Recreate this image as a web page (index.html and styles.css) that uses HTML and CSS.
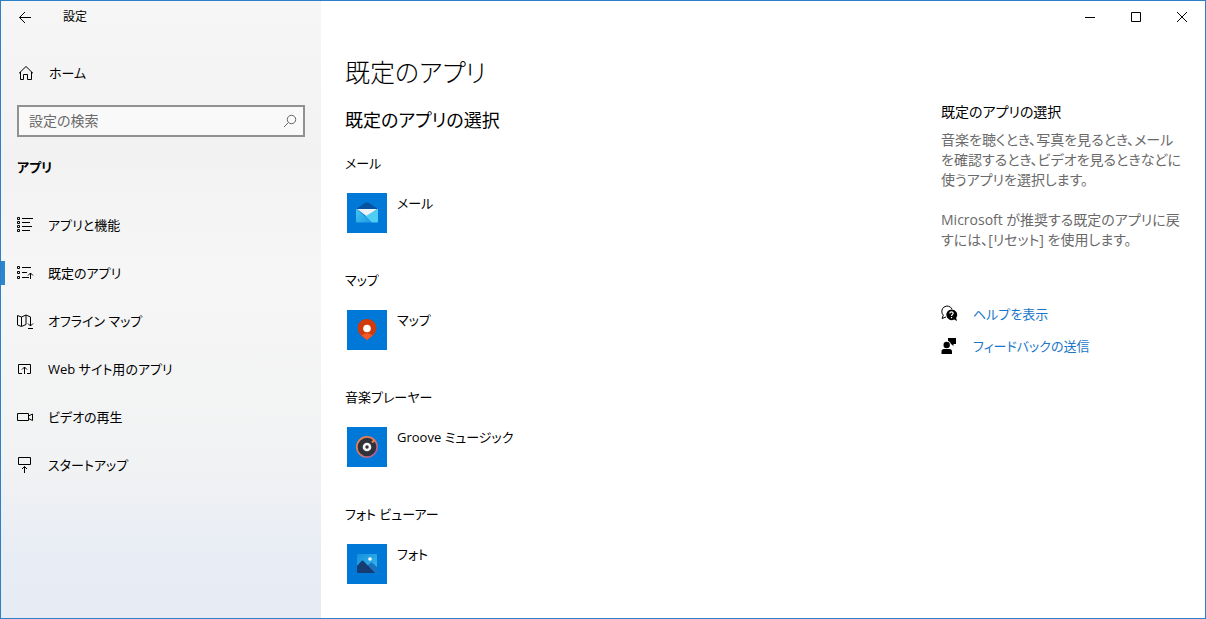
FILE: index.html
```html
<!DOCTYPE html>
<html lang="ja">
<head>
<meta charset="utf-8">
<meta name="viewport" content="width=device-width, initial-scale=1">
<title>設定</title>
<link rel="stylesheet" href="styles.css">
</head>
<body>
<div class="window">
  <div class="sidebar">
    <header class="titlebar">
      <button class="back" type="button" aria-label="戻る"><svg width="14" height="12" viewBox="0 0 14 12"><path d="M13 6.500H1.500M7 1L1.500 6.500 7 12"/></svg></button>
      <span class="app-name">設定</span>
    </header>
    <a class="home" href="#home">
      <svg width="16" height="16" viewBox="0 0 16 16"><path d="M1 8.300L8 1.500l7 6.800M2.500 7v7.500h3v-5h4v5h4V7"/></svg>
      <span>ホーム</span>
    </a>
    <form class="search" role="search">
      <input type="text" placeholder="設定の検索" aria-label="設定の検索">
      <button type="submit" aria-label="検索"><svg width="14" height="14" viewBox="0 0 14 14"><circle cx="8.500" cy="5.500" r="4.200"/><path d="M5.500 8.500L1 13"/></svg></button>
    </form>
    <h2 class="category">アプリ</h2>
    <nav class="nav" aria-label="アプリ">
      <a href="#features">
        <svg width="18" height="18" viewBox="0 0 18 18"><path d="M1.500 1.500h2v2h-2zM1.500 5.500h2v2h-2zM1.500 9.500h2v2h-2zM1.500 13.500h2v2h-2zM6 2.500h11M6 6.500h8M6 10.500h10M6 14.500h8"/></svg>
        <span>アプリと機能</span>
      </a>
      <a href="#defaults" aria-current="page">
        <svg width="18" height="18" viewBox="0 0 18 18"><path d="M1.500 2.500h2v2h-2zM1.500 7.500h2v2h-2zM1.500 12.500h2v2h-2zM6 3.500h9M6 8.500h5M6 13.500h7M14.500 15V9M12 11.500L14.500 9l2.500 2.500"/></svg>
        <span>既定のアプリ</span>
      </a>
      <a href="#maps">
        <svg width="18" height="18" viewBox="0 0 18 18"><path d="M10 12.500L5.500 14.500l-4-1.500V3.500l4 1.500 4.500-2 4.500 2V14M5.500 5v9M10 3v9.500M12 11.500l2.500 2.500 2.500-2.500M12 16.500h5"/></svg>
        <span>オフライン マップ</span>
      </a>
      <a href="#websites">
        <svg width="18" height="18" viewBox="0 0 18 18"><path d="M6 13.500H2.500v-9h12v9H11M8.500 14V7M6 9.500L8.500 7 11 9.500"/></svg>
        <span>Web サイト用のアプリ</span>
      </a>
      <a href="#video">
        <svg width="18" height="18" viewBox="0 0 18 18"><path d="M1.500 5.500h11v7h-11zM12.500 8l4-2v6.500l-4-2"/></svg>
        <span>ビデオの再生</span>
      </a>
      <a href="#startup">
        <svg width="18" height="18" viewBox="0 0 18 18"><path d="M2.500 1.500h12v7h-12zM8.500 17v-6.500M6 13l2.500-2.500L11 13"/></svg>
        <span>スタートアップ</span>
      </a>
    </nav>
  </div>

  <div class="content">
    <div class="caption">
      <button type="button" aria-label="最小化"><svg width="12" height="12" viewBox="0 0 12 12"><path d="M1 6.500h10"/></svg></button>
      <button type="button" aria-label="最大化"><svg width="12" height="12" viewBox="0 0 12 12"><path d="M1.500 1.500h9v9h-9z"/></svg></button>
      <button type="button" aria-label="閉じる"><svg width="12" height="12" viewBox="0 0 12 12"><path d="M1 1l10 10M11 1L1 11"/></svg></button>
    </div>
    <div class="columns">
      <main>
        <h1>既定のアプリ</h1>
        <h2>既定のアプリの選択</h2>
        <section class="group">
          <h3>メール</h3>
          <button class="app" type="button">
            <svg class="tile" width="40" height="40" viewBox="0 0 40 40">
              <defs><linearGradient id="mail" x2="1" y2="1"><stop stop-color="#45c9f2"/><stop offset="1" stop-color="#1d98e2"/></linearGradient></defs>
              <rect width="40" height="40" fill="#0078d7"/>
              <path d="M9 16l9-6q2-1.200 4 0l9 6z" fill="#0853a0"/>
              <path d="M10 16h20l-9.500 8z" fill="#eef3fa"/>
              <path d="M9 15.500L25 29.500H10q-1 0-1-1z" fill="url(#mail)"/>
              <path d="M31 15.500V28.500q0 1-1 1h-5L18.500 23.200z" fill="#4fcdf3"/>
            </svg>
            <span>メール</span>
          </button>
        </section>
        <section class="group">
          <h3>マップ</h3>
          <button class="app" type="button">
            <svg class="tile" width="40" height="40" viewBox="0 0 40 40">
              <rect width="40" height="40" fill="#0078d7"/>
              <path d="M20 9c-5.500 0-9.300 4-9.300 9 0 6 5.300 9 9.300 12 4-3 9.300-6 9.300-12 0-5-3.800-9-9.300-9z" fill="#d13b0b"/>
              <path d="M14.500 25.500q5.500-4.500 11 0L20 30z" fill="#f15a2b"/>
              <circle cx="20" cy="18.500" r="3.800" fill="#fff"/>
            </svg>
            <span>マップ</span>
          </button>
        </section>
        <section class="group">
          <h3>音楽プレーヤー</h3>
          <button class="app" type="button">
            <svg class="tile" width="40" height="40" viewBox="0 0 40 40">
              <defs><linearGradient id="groove" x2="1" y2="1"><stop stop-color="#f58b4c"/><stop offset=".5" stop-color="#d7775d"/><stop offset="1" stop-color="#8c55c8"/></linearGradient></defs>
              <rect width="40" height="40" fill="#0078d7"/>
              <circle cx="20" cy="20" r="11" fill="url(#groove)"/>
              <circle cx="20" cy="20" r="9.300" fill="#30313a"/>
              <path d="M25 15.500l2.500-2.500" fill="none" stroke="#ef8459" stroke-width="2"/>
              <circle cx="20" cy="20" r="4.300" fill="#f5f5f5"/>
              <circle cx="20" cy="20" r="1.700" fill="#30313a"/>
            </svg>
            <span>Groove ミュージック</span>
          </button>
        </section>
        <section class="group">
          <h3>フォト ビューアー</h3>
          <button class="app" type="button">
            <svg class="tile" width="40" height="40" viewBox="0 0 40 40">
              <defs>
                <linearGradient id="sky" x2="1" y2="1"><stop stop-color="#1590df"/><stop offset="1" stop-color="#39bdec"/></linearGradient>
                <clipPath id="photo"><rect x="10" y="10" width="20" height="19" rx="1"/></clipPath>
              </defs>
              <rect width="40" height="40" fill="#0078d7"/>
              <g clip-path="url(#photo)">
                <path d="M10 10h20v19H10z" fill="url(#sky)"/>
                <path d="M20 22l3.500-3q1-1 2 0L31 24v6H20z" fill="#1b72bd"/>
                <path d="M9 23l5.500-6q1-1 2 0L28 29H9z" fill="#173b73"/>
              </g>
              <circle cx="23" cy="15" r="1.800" fill="#fff"/>
            </svg>
            <span>フォト</span>
          </button>
        </section>
      </main>
      <aside>
        <h2>既定のアプリの選択</h2>
        <p>音楽を聴くとき、写真を見るとき、メール<br>を確認するとき、ビデオを見るときなどに<br>使うアプリを選択します。</p>
        <p>Microsoft が推奨する既定のアプリに戻<br>すには、[リセット] を使用します。</p>
        <div class="links">
          <a href="#help">
            <svg width="18" height="18" viewBox="0 0 18 18"><path d="M5 12L1 13.500l1.300-3.300A5.400 5.400 0 1 1 11 4" fill="none" stroke="#000"/><path d="M10.500 4.500a5.300 5.300 0 1 0 2.600 10l3 1.500-1-3A5.300 5.300 0 0 0 10.500 4.500z"/><path d="M8.800 8.500q0-1.700 1.700-1.700t1.700 1.500c0 1.200-1.700 1.200-1.700 2.700M10.500 12v1.300" fill="none" stroke="#fff" stroke-width="1.200"/></svg>
            <span>ヘルプを表示</span>
          </a>
          <a href="#feedback">
            <svg width="18" height="18" viewBox="0 0 18 18"><circle cx="5.700" cy="8" r="3.200"/><path d="M.500 17v-2.500q0-2.500 2.500-2.500h5.500q2.500 0 2.500 2.500V17zM7 1h8v6h-2.500v2L10 7q-.500-2-3-3.300z"/></svg>
            <span>フィードバックの送信</span>
          </a>
        </div>
      </aside>
    </div>
  </div>
</div>
</body>
</html>
```
FILE: styles.css
```css
* {
  box-sizing: border-box;
}

body {
  margin: 0;
  color: #000;
  font: 13px/20px "Open Sans", "Noto Sans CJK JP", sans-serif;
  font-feature-settings: "palt";
}

h1, h2, h3, p {
  margin: 0;
  font-size: 13px;
  font-weight: 400;
}

a {
  color: inherit;
  text-decoration: none;
}

button {
  padding: 0;
  border: 0;
  background: none;
  color: inherit;
  font: inherit;
  font-feature-settings: inherit;
}

svg {
  display: block;
  flex: none;
}

.window {
  display: grid;
  grid-template-columns: 320px 1fr;
  min-height: 100vh;
  border: 1px solid #2d7fc8;
  background: #fff;
}

.sidebar {
  background: linear-gradient(#f6f6f6, #f2f2f2 25%, #f6f6f6 45%, #f1f2f3 75%, #e8ecf4 90%, #e7ebf4);
}

.sidebar svg,
.caption svg {
  fill: none;
  stroke: #000;
}

.titlebar {
  display: flex;
  align-items: center;
  height: 32px;
  font-size: 12px;
}

.back {
  display: grid;
  place-items: center;
  width: 48px;
  height: 32px;
}

.app-name {
  margin-left: 14px;
}

.home {
  display: flex;
  align-items: center;
  gap: 15px;
  height: 48px;
  margin-top: 16px;
  padding-left: 17px;
}

.search {
  display: flex;
  align-items: center;
  height: 32px;
  margin: 8px 16px 0;
  border: 2px solid #919191;
  background: #f9f9f9;
}

.search input {
  flex: 1;
  min-width: 0;
  padding: 0 10px;
  border: 0;
  outline: 0;
  background: none;
  font: inherit;
  font-size: 14px;
  font-feature-settings: inherit;
}

.search input::placeholder {
  color: #6a6a6a;
  opacity: 1;
}

.search button {
  display: grid;
  place-items: center;
  width: 26px;
  height: 28px;
}

.search svg {
  stroke: #666;
}

.category {
  margin: 20px 16px 24px;
  font-weight: 700;
}

.nav a {
  display: flex;
  align-items: center;
  gap: 14px;
  height: 48px;
  padding-left: 15px;
}

.nav a[aria-current] {
  background: linear-gradient(#2d85d0, #2d85d0) left center / 4px 24px no-repeat;
}

.caption {
  display: flex;
  justify-content: flex-end;
}

.caption button {
  display: grid;
  place-items: center;
  width: 46px;
  height: 32px;
}

.columns {
  display: grid;
  grid-template-columns: 1fr 240px;
  gap: 24px;
  padding: 21px 24px 32px;
}

h1 {
  font-size: 25px;
  font-weight: 300;
  line-height: 36px;
}

main h2 {
  margin-top: 16px;
  font-size: 18px;
  line-height: 28px;
}

.group {
  margin-top: 19px;
}

.group + .group {
  margin-top: 37px;
}

.app {
  display: flex;
  align-items: flex-start;
  gap: 10px;
  margin: 20px 0 0 2px;
}

aside {
  padding-top: 48px;
  white-space: nowrap;
}

aside h2,
aside p {
  font-size: 14px;
}

aside p {
  margin-top: 8px;
  color: #6a6a6a;
}

aside p + p {
  margin-top: 20px;
}

.links {
  display: grid;
  gap: 12px;
  margin-top: 54px;
}

.links a {
  display: flex;
  align-items: center;
  gap: 14px;
  color: #1976c8;
}

.links svg {
  fill: #000;
}
```
